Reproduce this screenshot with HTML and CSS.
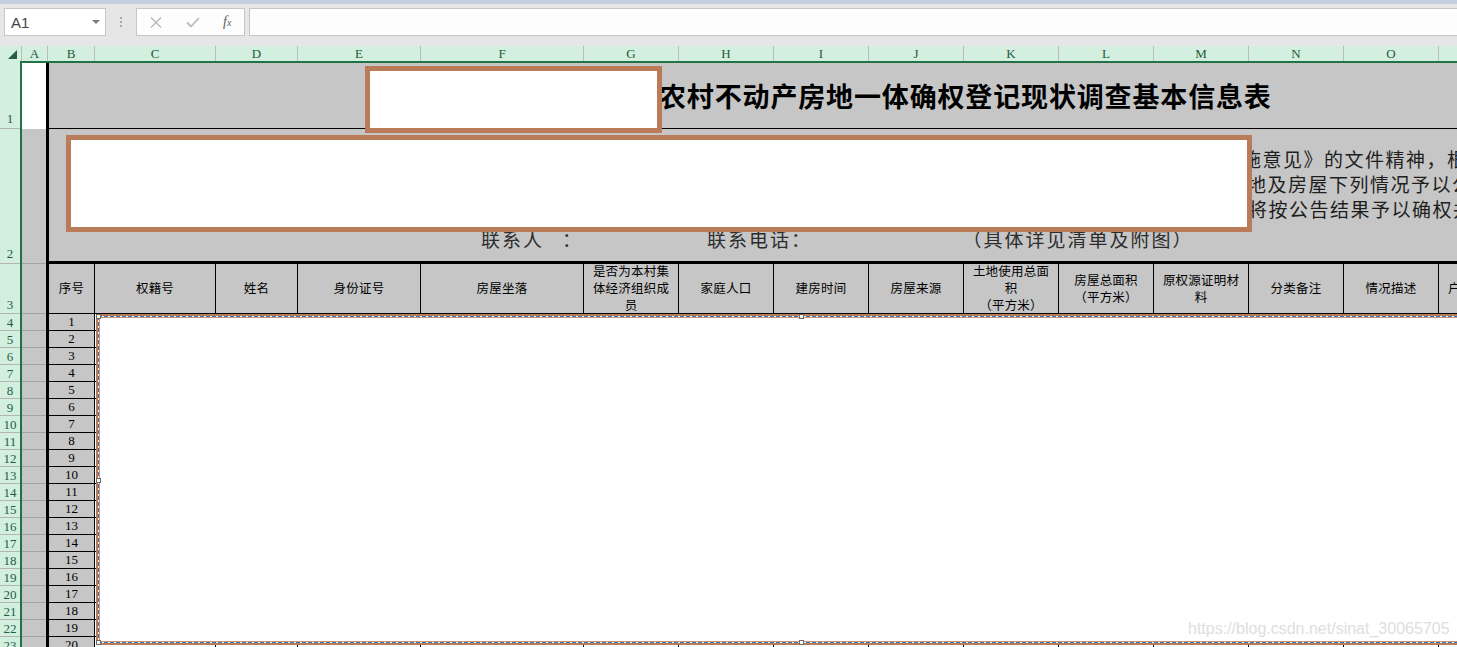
FILE: index.html
```html
<!DOCTYPE html>
<html lang="zh-CN">
<head>
<meta charset="utf-8">
<title>农村不动产房地一体确权登记现状调查基本信息表</title>
<link rel="stylesheet" href="styles.css">
</head>
<body>
<div class="topband"></div>
<div class="toolbar">
  <div class="namebox"><span class="nb-text">A1</span><span class="nb-arrow"></span></div>
  <div class="dots"><i></i><i></i><i></i></div>
  <div class="fxbox">
    <svg class="ic-x" width="12" height="11" viewBox="0 0 12 11"><path d="M1 0.5 L11 10.5 M11 0.5 L1 10.5" stroke="#b9b9b9" stroke-width="1.4" fill="none"/></svg>
    <svg class="ic-ok" width="14" height="11" viewBox="0 0 14 11"><path d="M1 5.5 L5 9.5 L13 1" stroke="#b9b9b9" stroke-width="1.8" fill="none"/></svg>
    <span class="fx">f<sub>x</sub></span>
  </div>
  <div class="formula"></div>
</div>
<div class="colheads">
  <div class="corner"><svg width="9" height="9" viewBox="0 0 9 9"><polygon points="9,0 9,9 0,9" fill="#2a5c3f"/></svg></div>
  <div class="ch w-a">A</div>
  <div class="ch w-hb">B</div>
  <div class="ch w-c">C</div>
  <div class="ch w-d">D</div>
  <div class="ch w-e">E</div>
  <div class="ch w-f">F</div>
  <div class="ch">G</div>
  <div class="ch">H</div>
  <div class="ch">I</div>
  <div class="ch">J</div>
  <div class="ch">K</div>
  <div class="ch">L</div>
  <div class="ch">M</div>
  <div class="ch">N</div>
  <div class="ch">O</div>
  <div class="ch">P</div>
</div>
<div class="sheet">
  <div class="rowheads">
    <div class="rh h1">1</div>
    <div class="rh h2">2</div>
    <div class="rh h3">3</div>
    <div class="rh">4</div><div class="rh">5</div><div class="rh">6</div><div class="rh">7</div>
    <div class="rh">8</div><div class="rh">9</div><div class="rh">10</div><div class="rh">11</div>
    <div class="rh">12</div><div class="rh">13</div><div class="rh">14</div><div class="rh">15</div>
    <div class="rh">16</div><div class="rh">17</div><div class="rh">18</div><div class="rh">19</div>
    <div class="rh">20</div><div class="rh">21</div><div class="rh">22</div><div class="rh">23</div>
    <div class="rh">24</div>
  </div>
  <div class="grid">
    <div class="row r1">
      <div class="ca white"></div>
      <div class="merged m1"><span class="title">农村不动产房地一体确权登记现状调查基本信息表</span></div>
    </div>
    <div class="row r2">
      <div class="ca"></div>
      <div class="merged m2">
        <div class="pl l1">施意见》的文件精神，根据</div>
        <div class="pl l2">地及房屋下列情况予以公示</div>
        <div class="pl l3">将按公告结果予以确权并颁证</div>
        <div class="pl l4"><span>联系人</span><span class="colon">：</span><span class="tel">联系电话：</span><span class="see">（具体详见清单及附图）</span></div>
      </div>
    </div>
    <div class="row r3">
      <div class="ca"></div>
      <div class="cell cb">序号</div>
      <div class="cell cc">权籍号</div>
      <div class="cell cd">姓名</div>
      <div class="cell ce">身份证号</div>
      <div class="cell cf">房屋坐落</div>
      <div class="cell">是否为本村集<br>体经济组织成<br>员</div>
      <div class="cell">家庭人口</div>
      <div class="cell">建房时间</div>
      <div class="cell">房屋来源</div>
      <div class="cell">土地使用总面<br>积<br>（平方米）</div>
      <div class="cell">房屋总面积<br>（平方米）</div>
      <div class="cell">原权源证明材<br>料</div>
      <div class="cell">分类备注</div>
      <div class="cell">情况描述</div>
      <div class="cell">户主签字确认</div>
    </div>
    <div class="row rd"><div class="ca"></div><div class="cell cb num">1</div><div class="cell cc d"></div><div class="cell cd d"></div><div class="cell ce d"></div><div class="cell cf d"></div><div class="cell d"></div><div class="cell d"></div><div class="cell d"></div><div class="cell d"></div><div class="cell d"></div><div class="cell d"></div><div class="cell d"></div><div class="cell d"></div><div class="cell d"></div><div class="cell d"></div></div>
    <div class="row rd"><div class="ca"></div><div class="cell cb num">2</div><div class="cell cc d"></div><div class="cell cd d"></div><div class="cell ce d"></div><div class="cell cf d"></div><div class="cell d"></div><div class="cell d"></div><div class="cell d"></div><div class="cell d"></div><div class="cell d"></div><div class="cell d"></div><div class="cell d"></div><div class="cell d"></div><div class="cell d"></div><div class="cell d"></div></div>
    <div class="row rd"><div class="ca"></div><div class="cell cb num">3</div><div class="cell cc d"></div><div class="cell cd d"></div><div class="cell ce d"></div><div class="cell cf d"></div><div class="cell d"></div><div class="cell d"></div><div class="cell d"></div><div class="cell d"></div><div class="cell d"></div><div class="cell d"></div><div class="cell d"></div><div class="cell d"></div><div class="cell d"></div><div class="cell d"></div></div>
    <div class="row rd"><div class="ca"></div><div class="cell cb num">4</div><div class="cell cc d"></div><div class="cell cd d"></div><div class="cell ce d"></div><div class="cell cf d"></div><div class="cell d"></div><div class="cell d"></div><div class="cell d"></div><div class="cell d"></div><div class="cell d"></div><div class="cell d"></div><div class="cell d"></div><div class="cell d"></div><div class="cell d"></div><div class="cell d"></div></div>
    <div class="row rd"><div class="ca"></div><div class="cell cb num">5</div><div class="cell cc d"></div><div class="cell cd d"></div><div class="cell ce d"></div><div class="cell cf d"></div><div class="cell d"></div><div class="cell d"></div><div class="cell d"></div><div class="cell d"></div><div class="cell d"></div><div class="cell d"></div><div class="cell d"></div><div class="cell d"></div><div class="cell d"></div><div class="cell d"></div></div>
    <div class="row rd"><div class="ca"></div><div class="cell cb num">6</div><div class="cell cc d"></div><div class="cell cd d"></div><div class="cell ce d"></div><div class="cell cf d"></div><div class="cell d"></div><div class="cell d"></div><div class="cell d"></div><div class="cell d"></div><div class="cell d"></div><div class="cell d"></div><div class="cell d"></div><div class="cell d"></div><div class="cell d"></div><div class="cell d"></div></div>
    <div class="row rd"><div class="ca"></div><div class="cell cb num">7</div><div class="cell cc d"></div><div class="cell cd d"></div><div class="cell ce d"></div><div class="cell cf d"></div><div class="cell d"></div><div class="cell d"></div><div class="cell d"></div><div class="cell d"></div><div class="cell d"></div><div class="cell d"></div><div class="cell d"></div><div class="cell d"></div><div class="cell d"></div><div class="cell d"></div></div>
    <div class="row rd"><div class="ca"></div><div class="cell cb num">8</div><div class="cell cc d"></div><div class="cell cd d"></div><div class="cell ce d"></div><div class="cell cf d"></div><div class="cell d"></div><div class="cell d"></div><div class="cell d"></div><div class="cell d"></div><div class="cell d"></div><div class="cell d"></div><div class="cell d"></div><div class="cell d"></div><div class="cell d"></div><div class="cell d"></div></div>
    <div class="row rd"><div class="ca"></div><div class="cell cb num">9</div><div class="cell cc d"></div><div class="cell cd d"></div><div class="cell ce d"></div><div class="cell cf d"></div><div class="cell d"></div><div class="cell d"></div><div class="cell d"></div><div class="cell d"></div><div class="cell d"></div><div class="cell d"></div><div class="cell d"></div><div class="cell d"></div><div class="cell d"></div><div class="cell d"></div></div>
    <div class="row rd"><div class="ca"></div><div class="cell cb num">10</div><div class="cell cc d"></div><div class="cell cd d"></div><div class="cell ce d"></div><div class="cell cf d"></div><div class="cell d"></div><div class="cell d"></div><div class="cell d"></div><div class="cell d"></div><div class="cell d"></div><div class="cell d"></div><div class="cell d"></div><div class="cell d"></div><div class="cell d"></div><div class="cell d"></div></div>
    <div class="row rd"><div class="ca"></div><div class="cell cb num">11</div><div class="cell cc d"></div><div class="cell cd d"></div><div class="cell ce d"></div><div class="cell cf d"></div><div class="cell d"></div><div class="cell d"></div><div class="cell d"></div><div class="cell d"></div><div class="cell d"></div><div class="cell d"></div><div class="cell d"></div><div class="cell d"></div><div class="cell d"></div><div class="cell d"></div></div>
    <div class="row rd"><div class="ca"></div><div class="cell cb num">12</div><div class="cell cc d"></div><div class="cell cd d"></div><div class="cell ce d"></div><div class="cell cf d"></div><div class="cell d"></div><div class="cell d"></div><div class="cell d"></div><div class="cell d"></div><div class="cell d"></div><div class="cell d"></div><div class="cell d"></div><div class="cell d"></div><div class="cell d"></div><div class="cell d"></div></div>
    <div class="row rd"><div class="ca"></div><div class="cell cb num">13</div><div class="cell cc d"></div><div class="cell cd d"></div><div class="cell ce d"></div><div class="cell cf d"></div><div class="cell d"></div><div class="cell d"></div><div class="cell d"></div><div class="cell d"></div><div class="cell d"></div><div class="cell d"></div><div class="cell d"></div><div class="cell d"></div><div class="cell d"></div><div class="cell d"></div></div>
    <div class="row rd"><div class="ca"></div><div class="cell cb num">14</div><div class="cell cc d"></div><div class="cell cd d"></div><div class="cell ce d"></div><div class="cell cf d"></div><div class="cell d"></div><div class="cell d"></div><div class="cell d"></div><div class="cell d"></div><div class="cell d"></div><div class="cell d"></div><div class="cell d"></div><div class="cell d"></div><div class="cell d"></div><div class="cell d"></div></div>
    <div class="row rd"><div class="ca"></div><div class="cell cb num">15</div><div class="cell cc d"></div><div class="cell cd d"></div><div class="cell ce d"></div><div class="cell cf d"></div><div class="cell d"></div><div class="cell d"></div><div class="cell d"></div><div class="cell d"></div><div class="cell d"></div><div class="cell d"></div><div class="cell d"></div><div class="cell d"></div><div class="cell d"></div><div class="cell d"></div></div>
    <div class="row rd"><div class="ca"></div><div class="cell cb num">16</div><div class="cell cc d"></div><div class="cell cd d"></div><div class="cell ce d"></div><div class="cell cf d"></div><div class="cell d"></div><div class="cell d"></div><div class="cell d"></div><div class="cell d"></div><div class="cell d"></div><div class="cell d"></div><div class="cell d"></div><div class="cell d"></div><div class="cell d"></div><div class="cell d"></div></div>
    <div class="row rd"><div class="ca"></div><div class="cell cb num">17</div><div class="cell cc d"></div><div class="cell cd d"></div><div class="cell ce d"></div><div class="cell cf d"></div><div class="cell d"></div><div class="cell d"></div><div class="cell d"></div><div class="cell d"></div><div class="cell d"></div><div class="cell d"></div><div class="cell d"></div><div class="cell d"></div><div class="cell d"></div><div class="cell d"></div></div>
    <div class="row rd"><div class="ca"></div><div class="cell cb num">18</div><div class="cell cc d"></div><div class="cell cd d"></div><div class="cell ce d"></div><div class="cell cf d"></div><div class="cell d"></div><div class="cell d"></div><div class="cell d"></div><div class="cell d"></div><div class="cell d"></div><div class="cell d"></div><div class="cell d"></div><div class="cell d"></div><div class="cell d"></div><div class="cell d"></div></div>
    <div class="row rd"><div class="ca"></div><div class="cell cb num">19</div><div class="cell cc d"></div><div class="cell cd d"></div><div class="cell ce d"></div><div class="cell cf d"></div><div class="cell d"></div><div class="cell d"></div><div class="cell d"></div><div class="cell d"></div><div class="cell d"></div><div class="cell d"></div><div class="cell d"></div><div class="cell d"></div><div class="cell d"></div><div class="cell d"></div></div>
    <div class="row rd"><div class="ca"></div><div class="cell cb num">20</div><div class="cell cc d"></div><div class="cell cd d"></div><div class="cell ce d"></div><div class="cell cf d"></div><div class="cell d"></div><div class="cell d"></div><div class="cell d"></div><div class="cell d"></div><div class="cell d"></div><div class="cell d"></div><div class="cell d"></div><div class="cell d"></div><div class="cell d"></div><div class="cell d"></div></div>
    <div class="row rd"><div class="ca"></div><div class="cell cb num">21</div><div class="cell cc d"></div><div class="cell cd d"></div><div class="cell ce d"></div><div class="cell cf d"></div><div class="cell d"></div><div class="cell d"></div><div class="cell d"></div><div class="cell d"></div><div class="cell d"></div><div class="cell d"></div><div class="cell d"></div><div class="cell d"></div><div class="cell d"></div><div class="cell d"></div></div>
  </div>
</div>

<div class="redact box1"></div>
<div class="redact box2"></div>

<div class="pic">
  <span class="handle h-tl"></span>
  <span class="handle h-tm"></span>
  <span class="handle h-ml"></span>
  <span class="handle h-bl"></span>
  <span class="handle h-bm"></span>
</div>
<div class="watermark">https://blog.csdn.net/sinat_30065705</div>
</body>
</html>
```

FILE: styles.css
```css
html, body {
  margin: 0;
  padding: 0;
}
body {
  width: 1457px;
  height: 647px;
  overflow: hidden;
  position: relative;
  background: #e6e6e6;
  font-family: "Noto Sans CJK SC", "Liberation Sans", sans-serif;
  color: #000;
}

/* ---------- formula bar ---------- */
.topband {
  height: 4px;
  background: #c6cfe1;
}
.toolbar {
  height: 42px;
  box-sizing: border-box;
  padding-top: 4px;
  display: flex;
  align-items: flex-start;
}
.namebox {
  margin-left: 4px;
  width: 102px;
  height: 28px;
  box-sizing: border-box;
  border: 1px solid #c6c6c6;
  background: #fff;
  display: flex;
  align-items: center;
  padding-left: 6px;
}
.nb-text {
  font-family: "Liberation Sans", sans-serif;
  font-size: 15px;
  color: #444;
}
.nb-arrow {
  margin-left: auto;
  margin-right: 5px;
  width: 0;
  height: 0;
  border-left: 4px solid transparent;
  border-right: 4px solid transparent;
  border-top: 4px solid #7a7a7a;
}
.dots {
  width: 30px;
  height: 28px;
  display: flex;
  flex-direction: column;
  align-items: center;
  justify-content: center;
  gap: 2px;
}
.dots i {
  display: block;
  width: 2px;
  height: 2px;
  background: #a9a9a9;
}
.fxbox {
  width: 109px;
  height: 28px;
  box-sizing: border-box;
  border: 1px solid #c6c6c6;
  background: #fdfdfd;
  display: flex;
  align-items: center;
  position: relative;
}
.ic-x { margin-left: 13px; }
.ic-ok { margin-left: 24px; }
.fx {
  margin-left: 23px;
  font-family: "Liberation Serif", serif;
  font-style: italic;
  font-size: 14px;
  color: #5a5a5a;
  line-height: 1;
}
.fx sub {
  font-size: 10px;
  vertical-align: 0;
}
.formula {
  flex: 1;
  margin-left: 4px;
  height: 28px;
  box-sizing: border-box;
  border: 1px solid #c6c6c6;
  border-right: none;
  background: #fdfdfd;
}

/* ---------- column headers ---------- */
.colheads {
  display: flex;
  height: 15px;
  background: #d3efdf;
  overflow: hidden;
}
.corner {
  flex: none;
  width: 22px;
  box-sizing: border-box;
  border-right: 1px solid #bcbcbc;
  display: flex;
  align-items: flex-end;
  justify-content: flex-end;
  padding: 0 4px 2px 0;
}
.ch {
  flex: none;
  width: 95px;
  box-sizing: border-box;
  border-right: 1px solid #bcbcbc;
  font-family: "Liberation Serif", serif;
  font-size: 13px;
  line-height: 15px;
  text-align: center;
  color: #24583a;
}
.ch.w-a { width: 26px; }
.ch.w-hb { width: 47px; }
.ch.w-c { width: 121px; }
.ch.w-d { width: 82px; }
.ch.w-e { width: 123px; }
.ch.w-f { width: 163px; }

/* ---------- sheet ---------- */
.sheet {
  display: flex;
  height: 586px;
}
.rowheads {
  flex: none;
  width: 20px;
  background: #d3efdf;
  padding-top: 2px;
}
.rh {
  height: 17px;
  box-sizing: border-box;
  border-bottom: 1px solid #b4b4b4;
  display: flex;
  align-items: flex-end;
  justify-content: center;
  font-family: "Liberation Serif", serif;
  font-size: 13px;
  line-height: 15px;
  color: #1f5e46;
}
.rh.h1 { height: 66px; padding-bottom: 2px; }
.rh.h2 { height: 135px; padding-bottom: 2px; }
.rh.h3 { height: 50px; padding-bottom: 1px; }

.grid {
  flex: 1;
  min-width: 0;
  border-top: 2px solid #217346;
  border-left: 2px solid #217346;
  overflow: hidden;
  background: #fff;
}
.row {
  display: flex;
  height: 17px;
}
.ca {
  flex: none;
  width: 24px;
  box-sizing: border-box;
  background: #c6c6c6;
  border-bottom: 1px solid #a3a3a3;
}
.ca.white {
  background: #fff;
  border-bottom: none;
}
.merged {
  flex: 1;
  min-width: 0;
  box-sizing: border-box;
  background: #c6c6c6;
  border-left: 3px solid #000;
}
.r1 { height: 66px; }
.m1 {
  border-bottom: 1px solid #000;
  display: flex;
  align-items: center;
  padding-left: 610px;
  white-space: nowrap;
}
.title {
  font-size: 27px;
  font-weight: 700;
  letter-spacing: 0.85px;
  color: #000;
}
.r2 { height: 135px; }
.m2 {
  border-bottom: 3px solid #000;
  padding-top: 17px;
  white-space: nowrap;
}
.pl {
  font-size: 19px;
  letter-spacing: 1.5px;
  line-height: 25px;
  color: #1e1e1e;
}
.l1 { margin-left: 1193px; }
.l2 { margin-left: 1198px; }
.l3 { margin-left: 1199px; }
.l4 {
  margin-left: 432px;
  margin-top: 5px;
  letter-spacing: 2px;
  color: #2c2c2c;
}
.l4 .colon { margin-left: 18px; }
.l4 .tel { margin-left: 124px; }
.l4 .see { margin-left: 160px; }

.r3 { height: 50px; }
.cell {
  flex: none;
  width: 95px;
  box-sizing: border-box;
  background: #c6c6c6;
  border-right: 1px solid #000;
  border-bottom: 1px solid #000;
  display: flex;
  align-items: center;
  justify-content: center;
  text-align: center;
  font-size: 12.5px;
  line-height: 16.7px;
  letter-spacing: 0.2px;
  white-space: nowrap;
}
.cell.cb { width: 49px; border-left: 3px solid #000; }
.cell.cc { width: 121px; }
.cell.cd { width: 82px; }
.cell.ce { width: 123px; }
.cell.cf { width: 163px; }
.cell.d { background: #fff; }
.cell.num {
  font-family: "Liberation Serif", serif;
  font-size: 13px;
  line-height: 16px;
  letter-spacing: 0;
}

/* ---------- overlays ---------- */
.redact {
  position: absolute;
  box-sizing: border-box;
  border: 5px solid #b97b58;
  background: #fff;
}
.box1 {
  left: 365px;
  top: 66px;
  width: 297px;
  height: 67px;
}
.box2 {
  left: 66px;
  top: 135px;
  width: 1186px;
  height: 97px;
}

.pic {
  position: absolute;
  left: 96px;
  top: 314px;
  width: 1420px;
  height: 331px;
  box-sizing: border-box;
  border: 2px solid #b97b58;
  background: #fff;
}
.pic::before {
  content: "";
  position: absolute;
  left: 0;
  top: 0;
  right: 0;
  bottom: 0;
  background:
    repeating-linear-gradient(90deg, #2f7bd3 0 4px, #fff 4px 6px) left top / 100% 1px no-repeat,
    repeating-linear-gradient(90deg, #2f7bd3 0 4px, #fff 4px 6px) left bottom / 100% 1px no-repeat,
    repeating-linear-gradient(180deg, #2f7bd3 0 4px, #fff 4px 6px) left top / 1px 100% no-repeat;
}
.pic::after {
  content: "";
  position: absolute;
  left: 1px;
  top: 1px;
  right: 0;
  bottom: 1px;
  border: 1px solid #c99274;
  border-right: none;
}
.handle {
  position: absolute;
  width: 5px;
  height: 5px;
  box-sizing: border-box;
  border: 1px solid #6a6a6a;
  background: #fff;
  z-index: 2;
}
.h-tl { left: -2px; top: -2px; }
.h-tm { left: 701px; top: -2px; }
.h-ml { left: -2px; top: 162px; }
.h-bl { left: -2px; bottom: -2px; }
.h-bm { left: 701px; bottom: -2px; }

.watermark {
  position: absolute;
  left: 1188px;
  top: 619px;
  font-family: "Liberation Sans", sans-serif;
  font-size: 16px;
  line-height: 20px;
  color: #dedede;
  white-space: nowrap;
}
```
